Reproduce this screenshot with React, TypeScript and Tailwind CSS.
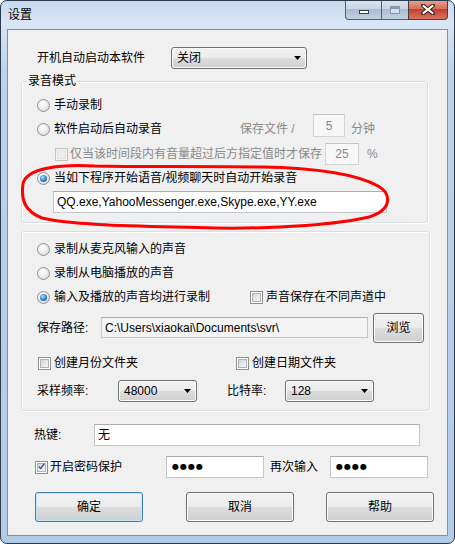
import React from "react";

const glossy =
  "bg-[linear-gradient(180deg,#f2f2f2_0%,#ebebeb_50%,#dddddd_50%,#cfcfcf_100%)]";

const Radio = ({ checked }: { checked?: boolean }) => (
  <span className="inline-flex w-[13px] h-[13px] shrink-0 items-center justify-center rounded-full border border-[#8f9194] bg-[radial-gradient(circle_at_40%_35%,#ffffff_0%,#eeeeee_45%,#c9cbce_100%)]">
    {checked && (
      <span className="w-[7px] h-[7px] rounded-full bg-[radial-gradient(circle_at_40%_35%,#b4e2ff_0%,#3d8fd6_45%,#14447a_100%)]" />
    )}
  </span>
);

const Check = ({ checked, disabled }: { checked?: boolean; disabled?: boolean }) => (
  <span
    className={`inline-flex w-[13px] h-[13px] shrink-0 items-center justify-center border ${
      disabled ? "border-[#c3c3c3] bg-[#f4f4f4]" : "border-[#8e8f8f] bg-white"
    }`}
  >
    <span
      className={`flex w-[9px] h-[9px] items-center justify-center border ${
        disabled
          ? "border-[#e2e2e2] bg-[#ededed]"
          : "border-[#aeb3b9] bg-[linear-gradient(135deg,#d3d6da,#f8f8f8)]"
      }`}
    >
      {checked && (
        <svg width="9" height="9" viewBox="0 0 9 9" className="-mt-[1px]">
          <path d="M1 4.5 L3.5 7 L8 1" fill="none" stroke="#3b5696" strokeWidth="1.8" />
        </svg>
      )}
    </span>
  </span>
);

const Combo = ({ value, className }: { value: string; className: string }) => (
  <div
    className={`h-[22px] flex items-center justify-between rounded-[3px] border border-[#707070] pl-[5px] pr-[5px] shadow-[inset_0_0_0_1px_#fafafa] ${glossy} ${className}`}
  >
    <span>{value}</span>
    <svg width="7" height="4" viewBox="0 0 7 4">
      <path d="M0 0 H7 L3.5 4 Z" fill="#000" />
    </svg>
  </div>
);

const Field = ({
  className,
  children,
}: {
  className: string;
  children?: React.ReactNode;
}) => (
  <div
    className={`flex items-center border border-[#c3c6cc] border-t-[#abadb3] px-[3px] ${className}`}
  >
    {children}
  </div>
);

const Btn = ({
  label,
  focused,
  className,
}: {
  label: string;
  focused?: boolean;
  className: string;
}) => (
  <button
    type="button"
    className={`h-[30px] flex items-center justify-center rounded-[3px] border ${
      focused
        ? "border-[#3c7fb1] shadow-[inset_0_0_0_1px_#bfe6fa]"
        : "border-[#707070] shadow-[inset_0_0_0_1px_#fbfbfb]"
    } ${glossy} ${className}`}
  >
    {label}
  </button>
);

const TitleBar = () => (
  <div className="flex h-[28px] items-start">
    <span className="ml-[7px] mt-[6px] text-[12px] leading-[16px]">设置</span>
    <div className="ml-auto mr-[6px] -mt-[1px] flex h-[20px]">
      <div className="flex w-[37px] items-center justify-center rounded-bl-[4px] border border-t-0 border-[#4d5e75] bg-[linear-gradient(180deg,#dbe5f1_0%,#c8d5e5_45%,#a9bcd2_50%,#c2d2e4_100%)]">
        <span className="mt-[4px] w-[10px] h-[4px] border border-[#33404f] bg-white" />
      </div>
      <div className="flex w-[26px] items-center justify-center border-b border-[#4d5e75] bg-[linear-gradient(180deg,#dbe5f1_0%,#c8d5e5_45%,#a9bcd2_50%,#c2d2e4_100%)]">
        <span className="w-[10px] h-[8px] border border-[#8796a8] bg-[#d6e0ec] shadow-[inset_0_2px_0_#8796a8]" />
      </div>
      <div className="flex w-[40px] items-center justify-center rounded-br-[4px] border border-t-0 border-[#4d3a3a] bg-[linear-gradient(180deg,#e9a795_0%,#d86f59_45%,#c2412d_50%,#d8735f_100%)]">
        <svg width="14" height="11" viewBox="0 0 14 11">
          <path d="M2 1.5 L12 9.5 M12 1.5 L2 9.5" stroke="#3a1f1f" strokeWidth="4" strokeLinecap="square" />
          <path d="M2.5 2 L11.5 9 M11.5 2 L2.5 9" stroke="#ffffff" strokeWidth="2" strokeLinecap="square" />
        </svg>
      </div>
    </div>
  </div>
);

const dim = "text-[#8a8a8a]";

export default function App() {
  return (
    <div className="relative w-[455px] h-[544px] bg-white font-['Liberation_Sans','Noto_Sans_CJK_SC',sans-serif] text-[12px] leading-[16px] text-black">
      <div className="flex h-[544px] w-[455px] flex-col overflow-hidden rounded-[7px] border border-[#2c3a4c] bg-[linear-gradient(180deg,#c6daf0_0%,#d9e6f5_22px,#bcd3ec_70px,#b2cbe7_100%)]">
        <TitleBar />
        <div className="mx-[6px] flex h-[507px] flex-col border border-[#7f91a6] bg-[#f0f0f0]">
          {/* startup */}
          <div className="mt-[17px] flex h-[22px] items-center">
            <span className="ml-[29px] w-[134px]">开机自动启动本软件</span>
            <Combo value="关闭" className="w-[136px]" />
          </div>

          {/* group 1 */}
          <div className="relative ml-[13px] mt-[12px] flex h-[142px] w-[407px] flex-col rounded-[3px] border border-[#d5dfe5] shadow-[inset_1px_1px_0_#ffffff,1px_1px_0_#ffffff]">
            <span className="absolute left-[5px] -top-[9px] bg-[#f0f0f0] px-[1px]">录音模式</span>
            <div className="mt-[11px] flex h-[24px] items-center pl-[15px]">
              <Radio />
              <span className="ml-[4px]">手动录制</span>
            </div>
            <div className="flex h-[24px] items-center pl-[15px]">
              <div className="flex w-[203px] items-center">
                <Radio />
                <span className="ml-[4px]">软件启动后自动录音</span>
              </div>
              <span className={`w-[73px] ${dim}`}>保存文件 /</span>
              <Field className={`mb-[7px] h-[23px] w-[32px] justify-center bg-[#f7f7f7] border-[#d4d4d4] border-t-[#c6c6c6] ${dim}`}>
                5
              </Field>
              <span className={`ml-[6px] ${dim}`}>分钟</span>
            </div>
            <div className="mt-[1px] flex h-[24px] items-center pl-[33px]">
              <Check disabled />
              <span className={`ml-[2px] w-[255px] ${dim}`}>仅当该时间段内有音量超过后方指定值时才保存</span>
              <Field className={`h-[22px] w-[34px] justify-center bg-[#f7f7f7] border-[#d4d4d4] border-t-[#c6c6c6] ${dim}`}>
                25
              </Field>
              <span className={`ml-[8px] ${dim}`}>%</span>
            </div>
            <div className="flex h-[24px] items-center pl-[15px]">
              <Radio checked />
              <span className="ml-[4px]">当如下程序开始语音/视频聊天时自动开始录音</span>
            </div>
            <Field className="ml-[31px] mt-[1px] h-[22px] w-[334px] bg-white">
              QQ.exe,YahooMessenger.exe,Skype.exe,YY.exe
            </Field>
          </div>

          {/* group 2 */}
          <div className="ml-[13px] mt-[8px] flex h-[180px] w-[409px] flex-col rounded-[3px] border border-[#d5dfe5] shadow-[inset_1px_1px_0_#ffffff,1px_1px_0_#ffffff]">
            <div className="mt-[5px] flex h-[24px] items-center pl-[15px]">
              <Radio />
              <span className="ml-[4px]">录制从麦克风输入的声音</span>
            </div>
            <div className="flex h-[24px] items-center pl-[15px]">
              <Radio />
              <span className="ml-[4px]">录制从电脑播放的声音</span>
            </div>
            <div className="flex h-[24px] items-center pl-[15px]">
              <div className="flex w-[213px] items-center">
                <Radio checked />
                <span className="ml-[4px]">输入及播放的声音均进行录制</span>
              </div>
              <Check />
              <span className="ml-[3px]">声音保存在不同声道中</span>
            </div>
            <div className="mt-[8px] flex h-[21px] items-center pl-[15px]">
              <span className="w-[64px]">保存路径:</span>
              <Field className="h-[21px] w-[267px] bg-[#f4f4f4]">C:\Users\xiaokai\Documents\svr\</Field>
              <Btn label="浏览" className="ml-[5px] h-[21px] w-[51px]" />
            </div>
            <div className="mt-[13px] flex h-[24px] items-center pl-[16px]">
              <div className="flex w-[198px] items-center">
                <Check />
                <span className="ml-[3px]">创建月份文件夹</span>
              </div>
              <Check />
              <span className="ml-[3px]">创建日期文件夹</span>
            </div>
            <div className="mt-[5px] flex h-[22px] items-center pl-[15px]">
              <span className="w-[81px]">采样频率:</span>
              <Combo value="48000" className="w-[79px]" />
              <span className="ml-[30px] w-[58px]">比特率:</span>
              <Combo value="128" className="w-[89px]" />
            </div>
          </div>

          {/* hotkey */}
          <div className="mt-[13px] flex h-[22px] items-center pl-[26px]">
            <span className="w-[60px]">热键:</span>
            <Field className="h-[22px] w-[326px] bg-white">无</Field>
          </div>

          {/* password */}
          <div className="mt-[10px] flex h-[22px] items-center pl-[27px]">
            <Check checked />
            <span className="ml-[2px] w-[116px]">开启密码保护</span>
            <Field className="h-[22px] w-[98px] bg-white">
              <span className="ml-[2px] text-[8px] tracking-[1px] font-['DejaVu_Sans',sans-serif]">●●●●</span>
            </Field>
            <span className="ml-[6px] w-[60px]">再次输入</span>
            <Field className="h-[22px] w-[98px] bg-white">
              <span className="ml-[2px] text-[8px] tracking-[1px] font-['DejaVu_Sans',sans-serif]">●●●●</span>
            </Field>
          </div>

          {/* buttons */}
          <div className="mt-[14px] flex h-[30px] items-center pl-[27px]">
            <Btn label="确定" focused className="w-[108px]" />
            <Btn label="取消" className="ml-[43px] w-[108px]" />
            <Btn label="帮助" className="ml-[32px] w-[108px]" />
          </div>
        </div>
      </div>

      {/* hand-drawn red mark */}
      <svg
        className="pointer-events-none absolute left-0 top-0"
        width="455"
        height="544"
        viewBox="0 0 455 544"
      >
        <path
          d="M95 166 C60 164 26 168 23 184 C21 199 24 211 42 218 C75 226 150 226 215 228 C280 229 340 224 369 217 C392 210 392 194 378 186 C356 174 320 168 262 167 C200 166 140 167 95 166"
          fill="none"
          stroke="#ff0000"
          strokeWidth="3"
          strokeLinejoin="round"
        />
      </svg>
    </div>
  );
}
